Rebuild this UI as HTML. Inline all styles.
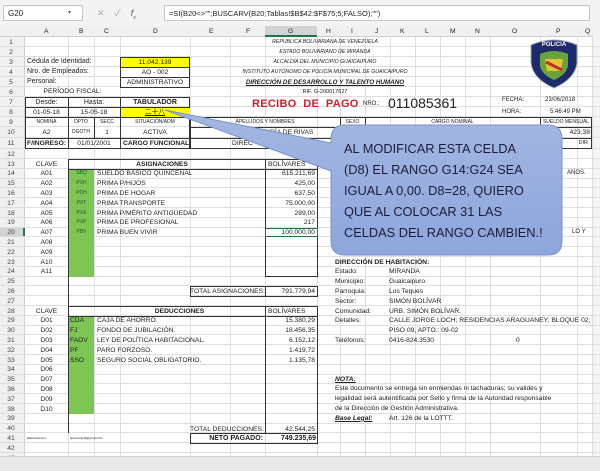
<!DOCTYPE html>
<html><head><meta charset="utf-8"><style>
*{margin:0;padding:0;box-sizing:border-box}
body{width:600px;height:471px;overflow:hidden;background:#fff;font-family:"Liberation Sans","Noto Sans CJK SC",sans-serif;color:#222;position:relative}
.a{position:absolute;white-space:nowrap}
.t{position:absolute;white-space:nowrap;font-size:6.7px;line-height:9px}
.c{text-align:center}
.r{text-align:right}
.b{font-weight:bold}
.vl{position:absolute;top:37px;height:420px;width:1px;background:#dedede}
.hl{position:absolute;left:0;width:600px;height:1px;background:#dedede}
.bx{position:absolute;border:1px solid #333}
.y{background:#ffff00}
.g{background:#7dc656}
</style></head><body>
<div class="a" style="left:0;top:0;width:600px;height:26px;background:#f3f3f3"></div>
<div class="a" style="left:3px;top:5px;width:80px;height:16px;background:#fff;border:1px solid #c6c6c6;font-size:8px;padding:3px 4px">G20</div>
<div class="a" style="left:68px;top:9px;font-size:6px;color:#666">▾</div>
<div class="a" style="left:97px;top:6px;font-size:9px;color:#aaa">✕ &nbsp;&nbsp; ✓ &nbsp;&nbsp; <i style="color:#555">f<sub style="font-size:5px">x</sub></i></div>
<div class="a" style="left:164px;top:5px;width:426px;height:16px;background:#fff;border:1px solid #c6c6c6;font-size:7.5px;padding:3px 4px">=SI(B20&lt;&gt;"";BUSCARV(B20;Tablas!$B$42:$F$75;5;FALSO);"")</div>
<div class="a" style="left:0;top:26px;width:600px;height:11px;background:#f0f0f0;border-bottom:1px solid #cfcfcf"></div>
<div class="a" style="left:265px;top:26px;width:52px;height:11px;background:#d3d3d3;border-bottom:2px solid #217346"></div>
<div class="a" style="left:0;top:37px;width:25px;height:420px;background:#f0f0f0;border-right:1px solid #cfcfcf"></div>
<div class="a" style="left:0;top:227px;width:25px;height:10px;background:#d3d3d3;border-right:2px solid #217346"></div>
<div class="t" style="top:27px;left:44px">A</div><div class="t" style="top:27px;left:79px">B</div><div class="t" style="top:27px;left:104px">C</div><div class="t" style="top:27px;left:153px">D</div><div class="t" style="top:27px;left:209px">E</div><div class="t" style="top:27px;left:246px">F</div><div class="t" style="top:27px;left:288px">G</div><div class="t" style="top:27px;left:326px">H</div><div class="t" style="top:27px;left:351px">I</div><div class="t" style="top:27px;left:375px">J</div><div class="t" style="top:27px;left:400px">K</div><div class="t" style="top:27px;left:425px">L</div><div class="t" style="top:27px;left:450px">M</div><div class="t" style="top:27px;left:475px">N</div><div class="t" style="top:27px;left:512px">O</div><div class="t" style="top:27px;left:556px">P</div><div class="t" style="top:27px;left:585px">Q</div>
<div class="vl" style="left:68px"></div><div class="vl" style="left:94px"></div><div class="vl" style="left:120px"></div><div class="vl" style="left:190px"></div><div class="vl" style="left:230px"></div><div class="vl" style="left:265px"></div><div class="vl" style="left:317px"></div><div class="vl" style="left:340px"></div><div class="vl" style="left:365px"></div><div class="vl" style="left:390px"></div><div class="vl" style="left:415px"></div><div class="vl" style="left:440px"></div><div class="vl" style="left:465px"></div><div class="vl" style="left:490px"></div><div class="vl" style="left:540px"></div><div class="vl" style="left:577px"></div><div class="vl" style="left:592px"></div>
<div class="a" style="left:593px;top:26px;width:7px;height:445px;background:#f3f3f3"></div>
<div id="rows"></div>
<script>
var tops=[0,37,47,57,67,77,87,97,107,117,127,138,149];
for(var n=13;n<=44;n++)tops[n]=159+(n-13)*9.8;
var h='';
for(var n=1;n<=43;n++){h+='<div class="hl" style="top:'+(tops[n+1]-1)+'px"></div><div class="t c" style="left:0;width:22px;top:'+(tops[n]+0.5)+'px;color:#444">'+n+'</div>';}
document.getElementById('rows').innerHTML=h;
</script>
<div class="t" style="left:27px;top:57px;font-size:7px">Cédula de Identidad:</div>
<div class="t" style="left:27px;top:67px;font-size:7px">Nro. de Empleados:</div>
<div class="t" style="left:27px;top:77px;font-size:7px">Personal:</div>
<div class="t c" style="left:25px;width:95px;top:87px">PERÍODO FISCAL:</div>
<div class="bx y t c" style="left:120px;top:57px;width:70px;height:11px">11.042.139</div>
<div class="bx t c" style="left:120px;top:67px;width:70px;height:11px;background:#fff">AO - 002</div>
<div class="bx t c" style="left:120px;top:77px;width:70px;height:11px;background:#fff">ADMINISTRATIVO</div>
<div class="bx" style="left:25px;top:97px;width:165px;height:52px"></div>
<div class="a" style="left:25px;top:107px;width:165px;height:1px;background:#333"></div>
<div class="a" style="left:25px;top:117px;width:165px;height:1px;background:#333"></div>
<div class="a" style="left:25px;top:138px;width:165px;height:1px;background:#333"></div>
<div class="a" style="left:68px;top:97px;width:1px;height:52px;background:#333"></div>
<div class="a" style="left:120px;top:97px;width:1px;height:52px;background:#333"></div>
<div class="a" style="left:94px;top:117px;width:1px;height:21px;background:#333"></div>
<div class="a y" style="left:121px;top:108px;width:69px;height:9px"></div>
<div class="t c" style="left:25px;width:43px;top:98px;font-size:7px">Desde:</div>
<div class="t c" style="left:68px;width:52px;top:98px;font-size:7px">Hasta:</div>
<div class="t c b" style="left:120px;width:70px;top:98px;font-size:7px">TABULADOR</div>
<div class="t c" style="left:25px;width:43px;top:108px">01-05-18</div>
<div class="t c" style="left:68px;width:52px;top:108px">15-05-18</div>
<div class="t c" style="left:120px;width:70px;top:108px;text-decoration:underline">二十八</div>
<div class="t c" style="left:25px;width:43px;top:118px;font-size:5px">NOMINA</div>
<div class="t c" style="left:68px;width:26px;top:118px;font-size:5px">DPTO</div>
<div class="t c" style="left:94px;width:26px;top:118px;font-size:5px">SECC</div>
<div class="t c" style="left:120px;width:70px;top:118px;font-size:5px">SITUACIÓN/ADM</div>
<div class="t c" style="left:25px;width:43px;top:128px">A2</div>
<div class="t c" style="left:68px;width:26px;top:128px;font-size:5px">DGOTH</div>
<div class="t c" style="left:94px;width:26px;top:128px">1</div>
<div class="t c" style="left:120px;width:70px;top:128px">ACTIVA</div>
<div class="t b" style="left:27px;top:139px">F/INGRESO:</div>
<div class="t c" style="left:68px;width:52px;top:139px">01/01/2001</div>
<div class="t b" style="left:123px;top:139px">CARGO FUNCIONAL:</div>
<div class="bx" style="left:190px;top:117px;width:402px;height:32px"></div>
<div class="a" style="left:190px;top:127px;width:402px;height:1px;background:#333"></div>
<div class="a" style="left:190px;top:138px;width:402px;height:1px;background:#333"></div>
<div class="a" style="left:340px;top:117px;width:1px;height:21px;background:#333"></div>
<div class="a" style="left:365px;top:117px;width:1px;height:21px;background:#333"></div>
<div class="a" style="left:540px;top:117px;width:1px;height:32px;background:#333"></div>
<div class="t c" style="left:190px;width:150px;top:118px;font-size:5px">APELLIDOS Y NOMBRES</div>
<div class="t c" style="left:340px;width:25px;top:118px;font-size:5px">SEXO</div>
<div class="t c" style="left:365px;width:175px;top:118px;font-size:5px">CARGO NOMINAL</div>
<div class="t c" style="left:540px;width:52px;top:118px;font-size:5px">SUELDO MENSUAL</div>
<div class="t" style="left:238px;top:128px">VA</div><div class="t" style="left:260px;top:128px">MARÍA DE RIVAS</div>
<div class="t r" style="left:540px;width:50px;top:128px">423,38</div>
<div class="t" style="left:232px;top:139px">DIREC</div>
<div class="t r" style="left:540px;width:48px;top:139px;font-size:5.5px">DIR</div>
<div class="t c" style="left:230px;width:190px;top:38px;font-size:5.2px;font-style:italic">REPUBLICA BOLIVARIANA DE VENEZUELA</div>
<div class="t c" style="left:230px;width:190px;top:48px;font-size:5.2px;font-style:italic">ESTADO BOLIVARIANO DE MIRANDA</div>
<div class="t c" style="left:230px;width:190px;top:58px;font-size:5.2px;font-style:italic">ALCALDÍA DEL MUNICIPIO GUAICAIPURO</div>
<div class="t c" style="left:230px;width:190px;top:68px;font-size:5.2px;font-style:italic">INSTITUTO AUTÓNOMO DE POLICÍA MUNICIPAL DE GUAICAIPURO</div>
<div class="t c b" style="left:230px;width:190px;top:78px;font-size:6.3px;font-style:italic;text-decoration:underline">DIRECCIÓN DE DESARROLLO Y TALENTO HUMANO</div>
<div class="t c" style="left:230px;width:190px;top:88px;font-size:5.5px">RIF.  G-200017627</div>
<div class="a b" style="left:252px;top:98px;font-size:11px;color:#d0202a;letter-spacing:.3px">RECIBO&nbsp; DE&nbsp; PAGO</div>
<div class="t" style="left:363px;top:100px;font-size:6px">NRO.:</div>
<div class="a" style="left:388px;top:95px;font-size:14px">011085361</div>
<div class="t" style="left:502px;top:96px;font-size:6px">FECHA:</div>
<div class="t" style="left:502px;top:108px;font-size:6px">HORA:</div>
<div class="t" style="left:545px;top:96px;font-size:6px">23/06/2018</div>
<div class="t" style="left:550px;top:108px;font-size:6px">5:46:49 PM</div>
<svg class="a" style="left:527px;top:37px" width="54" height="52" viewBox="0 0 54 52">
<path d="M4 8 Q27 -2 50 8 L50 26 Q48 42 27 51 Q6 42 4 26 Z" fill="#1d2a6b" stroke="#9aa" stroke-width="1"/>
<path d="M13 17 Q27 11 41 17 L41 29 Q39 38 27 43 Q15 38 13 29 Z" fill="#6aa33e"/>
<path d="M18 22 L36 22 L34 34 L20 34 Z" fill="#e2c53a"/>
<path d="M19 25 L35 33" stroke="#c0302a" stroke-width="3"/>
<text x="27" y="9" font-size="6" font-weight="bold" fill="#fff" text-anchor="middle" font-family="Liberation Sans">POLICIA</text>
</svg>
<div class="a g" style="left:69px;top:168.8px;width:25px;height:107.8px"></div>
<div class="bx" style="left:68px;top:159px;width:250px;height:118px;border-width:1px 0 0 1px"></div>
<div class="a" style="left:68px;top:168.8px;width:250px;height:1px;background:#333"></div>
<div class="bx" style="left:265px;top:159px;width:53px;height:118px"></div>
<div class="bx" style="left:190px;top:286.4px;width:128px;height:10.8px"></div>
<div class="t c" style="left:25px;width:43px;top:160px">CLAVE</div>
<div class="t c b" style="left:94px;width:136px;top:160px">ASIGNACIONES</div>
<div class="t" style="left:268px;top:160px">BOLÍVARES</div>
<div id="asg"></div>
<div class="t r" style="left:190px;width:73px;top:287.4px">TOTAL ASIGNACIONES:</div>
<div class="a" style="left:265px;top:286.4px;width:1px;height:10.8px;background:#333"></div>
<div class="t r" style="left:265px;width:50px;top:287.4px">791.779,94</div>
<div class="a g" style="left:69px;top:315.8px;width:25px;height:98px"></div>
<div class="a" style="left:68px;top:306px;width:1px;height:127px;background:#333"></div>
<div class="a" style="left:68px;top:277px;width:1px;height:30px;background:#333"></div>
<div class="bx" style="left:68px;top:306px;width:250px;height:10.8px"></div>
<div class="bx" style="left:265px;top:306px;width:53px;height:128px"></div>
<div class="bx" style="left:190px;top:423.6px;width:128px;height:10.8px;border-width:0 0 1px 0"></div>
<div class="bx" style="left:190px;top:433.4px;width:128px;height:10.8px"></div>
<div class="t c" style="left:25px;width:43px;top:307px">CLAVE</div>
<div class="t c b" style="left:94px;width:171px;top:307px">DEDUCCIONES</div>
<div class="t" style="left:268px;top:307px">BOLÍVARES</div>
<div id="ded"></div>
<div class="t r" style="left:190px;width:73px;top:424.6px">TOTAL DEDUCCIONES:</div>
<div class="t r" style="left:265px;width:50px;top:424.6px">42.544,25</div>
<div class="t r b" style="left:190px;width:73px;top:434.4px;font-size:7px">NETO PAGADO:</div>
<div class="t r b" style="left:265px;width:51px;top:434.4px;font-size:7px">749.235,69</div>
<div class="t" style="left:27px;top:434px;font-size:3px;font-style:italic">Elaborado por:</div>
<div class="t" style="left:70px;top:434px;font-size:3px">apocrainipal@gmail.com</div>
<div class="a" style="left:265px;top:227.6px;width:53px;height:9.8px;border:1.5px solid #217346"></div>
<script>
var a=[["A01","SBQ","SUELDO BÁSICO QUINCENAL","615.211,69"],["A02","PXH","PRIMA P/HIJOS","425,00"],["A03","PDH","PRIMA DE HOGAR","637,50"],["A04","PXT","PRIMA TRANSPORTE","75.000,00"],["A05","PXA","PRIMA P/MÉRITO ANTIGÜEDAD","289,00"],["A06","PXP","PRIMA DE PROFESIONAL","217"],["A07","PBV","PRIMA BUEN VIVIR","100.000,00"],["A08"],["A09"],["A10"],["A11"]];
var s='';
a.forEach(function(r,i){var y=tops[14+i]+0.5;s+='<div class="t c" style="left:25px;width:43px;top:'+y+'px">'+r[0]+'</div>';if(r[1]){s+='<div class="t c" style="left:69px;width:25px;top:'+y+'px;font-size:5px;color:#1d5d1d">'+r[1]+'</div><div class="t" style="left:97px;top:'+y+'px">'+r[2]+'</div><div class="t r" style="left:265px;width:50px;top:'+y+'px">'+r[3]+'</div>';}});
document.getElementById('asg').innerHTML=s;
var d=[["D01","CDA","CAJA DE AHORRO.","15.380,29"],["D02","FJ","FONDO DE JUBILACIÓN.","18.456,35"],["D03","FAOV","LEY DE POLÍTICA HABITACIONAL.","6.152,12"],["D04","PF","PARO FORZOSO.","1.419,72"],["D05","SSO","SEGURO SOCIAL OBLIGATORIO.","1.135,78"],["D06"],["D07"],["D08"],["D09"],["D10"]];
s='';
d.forEach(function(r,i){var y=tops[29+i]+0.5;s+='<div class="t c" style="left:25px;width:43px;top:'+y+'px">'+r[0]+'</div>';if(r[1]){s+='<div class="t" style="left:70px;top:'+y+'px">'+r[1]+'</div><div class="t" style="left:97px;top:'+y+'px">'+r[2]+'</div><div class="t r" style="left:265px;width:50px;top:'+y+'px">'+r[3]+'</div>';}});
document.getElementById('ded').innerHTML=s;
</script>
<div class="t" style="left:567px;top:169px;font-size:6px">ANOS.</div>
<div class="t" style="left:572px;top:228px;font-size:6px">LO Y</div>
<div class="t b" style="left:335px;top:257.5px">DIRECCIÓN DE HABITACIÓN:</div>
<div class="t" style="left:335px;top:267.3px">Estado:</div><div class="t" style="left:389px;top:267.3px">MIRANDA</div>
<div class="t" style="left:335px;top:277.1px">Municipio:</div><div class="t" style="left:389px;top:277.1px">Guaicaipuro.</div>
<div class="t" style="left:335px;top:286.9px">Parroquia:</div><div class="t" style="left:389px;top:286.9px">Los Teques</div>
<div class="t" style="left:335px;top:296.7px">Sector:</div><div class="t" style="left:389px;top:296.7px">SIMÓN BOLÍVAR</div>
<div class="t" style="left:335px;top:306.5px">Comunidad:</div><div class="t" style="left:389px;top:306.5px">URB. SIMÓN BOLÍVAR.</div>
<div class="t" style="left:335px;top:316.3px">Detalles:</div><div class="t" style="left:389px;top:316.3px">CALLE JORGE LOCH; RESIDENCIAS ARAGUANEY; BLOQUE 02;</div>
<div class="t" style="left:389px;top:326.1px">PISO 09, APTO.: 09-02</div>
<div class="t" style="left:335px;top:335.9px">Teléfonos:</div><div class="t" style="left:389px;top:335.9px">0416-824.3530</div><div class="t" style="left:516px;top:335.9px">0</div>
<div class="t b" style="left:335px;top:374.6px;font-style:italic;text-decoration:underline">NOTA:</div>
<div class="t" style="left:335px;top:384.4px">Este documento se entrega sin enmiendas ni tachaduras; su valides y</div>
<div class="t" style="left:335px;top:394.2px">legalidad será autentificada por Sello y firma de la Autoridad responsable</div>
<div class="t" style="left:335px;top:404px">de la Dirección de Gestión Administrativa.</div>
<div class="t b" style="left:335px;top:413.8px;font-style:italic;text-decoration:underline">Base Legal:</div><div class="t" style="left:389px;top:413.8px">Art. 126 de la LOTTT.</div>
<div class="a" style="left:0;top:456px;width:600px;height:15px;background:#e9e9e9;border-top:1px solid #d0d0d0"></div>
<svg class="a" style="left:0;top:0" width="600" height="471">
<defs><linearGradient id="gg" x1="0" y1="0" x2="0" y2="1"><stop offset="0" stop-color="#a4b7e3"/><stop offset="1" stop-color="#8ea6dc"/></linearGradient></defs>
<path d="M345 125 H548 Q562 125 562 139 V241 Q562 255 548 255 H345 Q331 255 331 241 V171 L165 110 L331 143 V139 Q331 125 345 125 Z" fill="url(#gg)" stroke="#7b93c8" stroke-width="1"/>
</svg>
<div class="a" style="left:344px;top:138px;font-size:12.8px;line-height:21px;color:#1c1c3a;white-space:nowrap">AL MODIFICAR ESTA CELDA<br>(D8) EL RANGO G14:G24 SEA<br>IGUAL A 0,00. D8=28, QUIERO<br>QUE AL COLOCAR 31 LAS<br>CELDAS DEL RANGO CAMBIEN.!</div>
</body></html>
